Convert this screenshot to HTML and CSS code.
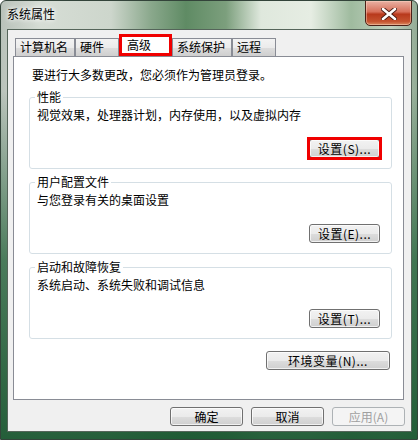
FILE: index.html
```html
<!DOCTYPE html>
<html lang="zh-CN">
<head>
    <meta charset="UTF-8">
    <meta name="viewport" content="width=device-width, initial-scale=1.0">
    <title>系统属性</title>
    <link rel="stylesheet" href="styles.css">
</head>
<body>
    <div class="window">
        <div class="titlebar">
            <span class="title">系统属性</span>
            <button type="button" class="close">
                <svg width="16" height="12" viewBox="0 0 16 12">
                    <path d="M2 1 L14 11 M14 1 L2 11" stroke="#4a1d14" stroke-width="4.4" stroke-linecap="round"/>
                    <path d="M2 1 L14 11 M14 1 L2 11" stroke="#ffffff" stroke-width="2.6" stroke-linecap="round"/>
                </svg>
            </button>
        </div>
        <div class="client">
            <ul class="tabs">
                <li class="tab">计算机名</li>
                <li class="tab">硬件</li>
                <li class="tab active">高级</li>
                <li class="tab">系统保护</li>
                <li class="tab">远程</li>
            </ul>
            <div class="panel">
                <p class="intro">要进行大多数更改，您必须作为管理员登录。</p>

                <fieldset class="group">
                    <legend>性能</legend>
                    <p>视觉效果，处理器计划，内存使用，以及虚拟内存</p>
                    <div class="row"><span class="mark"><button type="button" class="btn">设置(S)...</button></span></div>
                </fieldset>

                <fieldset class="group">
                    <legend>用户配置文件</legend>
                    <p>与您登录有关的桌面设置</p>
                    <div class="row"><button type="button" class="btn">设置(E)...</button></div>
                </fieldset>

                <fieldset class="group">
                    <legend>启动和故障恢复</legend>
                    <p>系统启动、系统失败和调试信息</p>
                    <div class="row"><button type="button" class="btn">设置(T)...</button></div>
                </fieldset>

                <div class="row env"><button type="button" class="btn wide">环境变量(N)...</button></div>
            </div>
            <div class="footer">
                <button type="button" class="btn big">确定</button>
                <button type="button" class="btn big">取消</button>
                <button type="button" class="btn big" disabled>应用(A)</button>
            </div>
        </div>
    </div>
</body>
</html>
```

FILE: styles.css
```css
*{
    box-sizing: border-box;
}
body{
    margin: 0;
    font-family: "Noto Sans CJK SC", "Liberation Sans", sans-serif;
    font-size: 12px;
    color: #000;
}
.window{
    width: 418px;
    height: 440px;
    border-radius: 6px 6px 0 0;
    overflow: hidden;
    background:
        linear-gradient(180deg, rgba(40,100,60,0) 0px, rgba(40,100,60,0) 90px, rgba(36,98,58,.75) 260px, rgba(28,88,50,.95) 440px),
        linear-gradient(90deg, #b9c2ba 0px, #d6ddd5 40px, #cdd6cc 110px, #8aa88c 150px, #5f8b64 185px, #7c9f7d 225px, #dfe8dd 260px, #e6ede3 310px, #9fbb9f 350px, #c2d2c0 390px, #8fa892 418px);
    border: 1px solid #33443a;
}
.titlebar{
    height: 28px;
    display: flex;
    justify-content: space-between;
    align-items: flex-start;
}
.title{
    padding: 6px 0 0 6px;
    line-height: 14px;
    text-shadow: 0 0 6px #fff, 0 0 4px #fff;
}
.close{
    width: 47px;
    height: 26px;
    margin: -1px 5px 0 0;
    padding: 2px 0 0;
    border: 1px solid #4b2017;
    border-radius: 0 0 5px 5px;
    background: linear-gradient(180deg, #e9b1a3 0%, #d7705a 45%, #b8391c 55%, #c5532f 85%, #d98a60 100%);
    box-shadow: inset 0 0 0 1px rgba(255,220,200,.45);
    display: flex;
    align-items: center;
    justify-content: center;
}
.client{
    height: 403px;
    margin: 0 5px 0 6px;
    border: 1px solid #55655a;
    background: #f0f0f0;
    display: flex;
    flex-direction: column;
}
.tabs{
    list-style: none;
    margin: 0;
    padding: 0 0 0 7px;
    height: 26px;
    display: flex;
    align-items: flex-end;
}
.tab{
    height: 18px;
    min-width: 44px;
    padding: 0 6px 0 4px;
    line-height: 16px;
    border: 1px solid #898c95;
    border-bottom: none;
    background: linear-gradient(180deg, #f3f3f3 0%, #ebebeb 50%, #dddddd 51%, #cfcfcf 100%);
}
.tab.active{
    height: 22px;
    width: 53px;
    padding-left: 5px;
    line-height: 16px;
    border: 3px solid #f00000;
    background: #fff;
}
.panel{
    height: 344px;
    margin: 0 7px 0 5px;
    border: 1px solid #898c95;
    background: #fff;
}
.intro{
    margin: 11px 0 0 18px;
    line-height: 14px;
}
.group{
    margin: 8px 11px 0 15px;
    padding: 0 11px 10px 7px;
    border: 1px solid #d5dfe5;
    border-radius: 3px;
}
.group + .group{
    margin-top: 6px;
}
.group legend{
    margin-left: -2px;
    padding: 0 2px;
    line-height: 14px;
}
.group p{
    margin: 4px 0 0;
    line-height: 14px;
}
.row{
    display: flex;
    justify-content: flex-end;
    margin-top: 17px;
}
.btn{
    width: 71px;
    height: 19px;
    padding: 0;
    font-family: inherit;
    font-size: 12px;
    line-height: 15px;
    letter-spacing: .5px;
    color: #000;
    border: 1px solid #707070;
    border-radius: 3px;
    background: linear-gradient(180deg, #f2f2f2 0%, #ebebeb 50%, #dddddd 51%, #cfcfcf 100%);
    box-shadow: inset 0 0 0 1px rgba(255,255,255,.7);
}
.mark{
    display: flex;
    outline: 3px solid #f00000;
    outline-offset: -1px;
}
.env{
    margin-top: 12px;
    padding-right: 13px;
}
.btn.wide{
    width: 124px;
}
.footer{
    display: flex;
    justify-content: flex-end;
    gap: 8px;
    margin: 7px 6px 0 0;
}
.btn.big{
    width: 73px;
    letter-spacing: 0;
}
.btn:disabled{
    color: #a0a0a0;
    border-color: #adb2b5;
    background: #f4f4f4;
    box-shadow: none;
}
```
